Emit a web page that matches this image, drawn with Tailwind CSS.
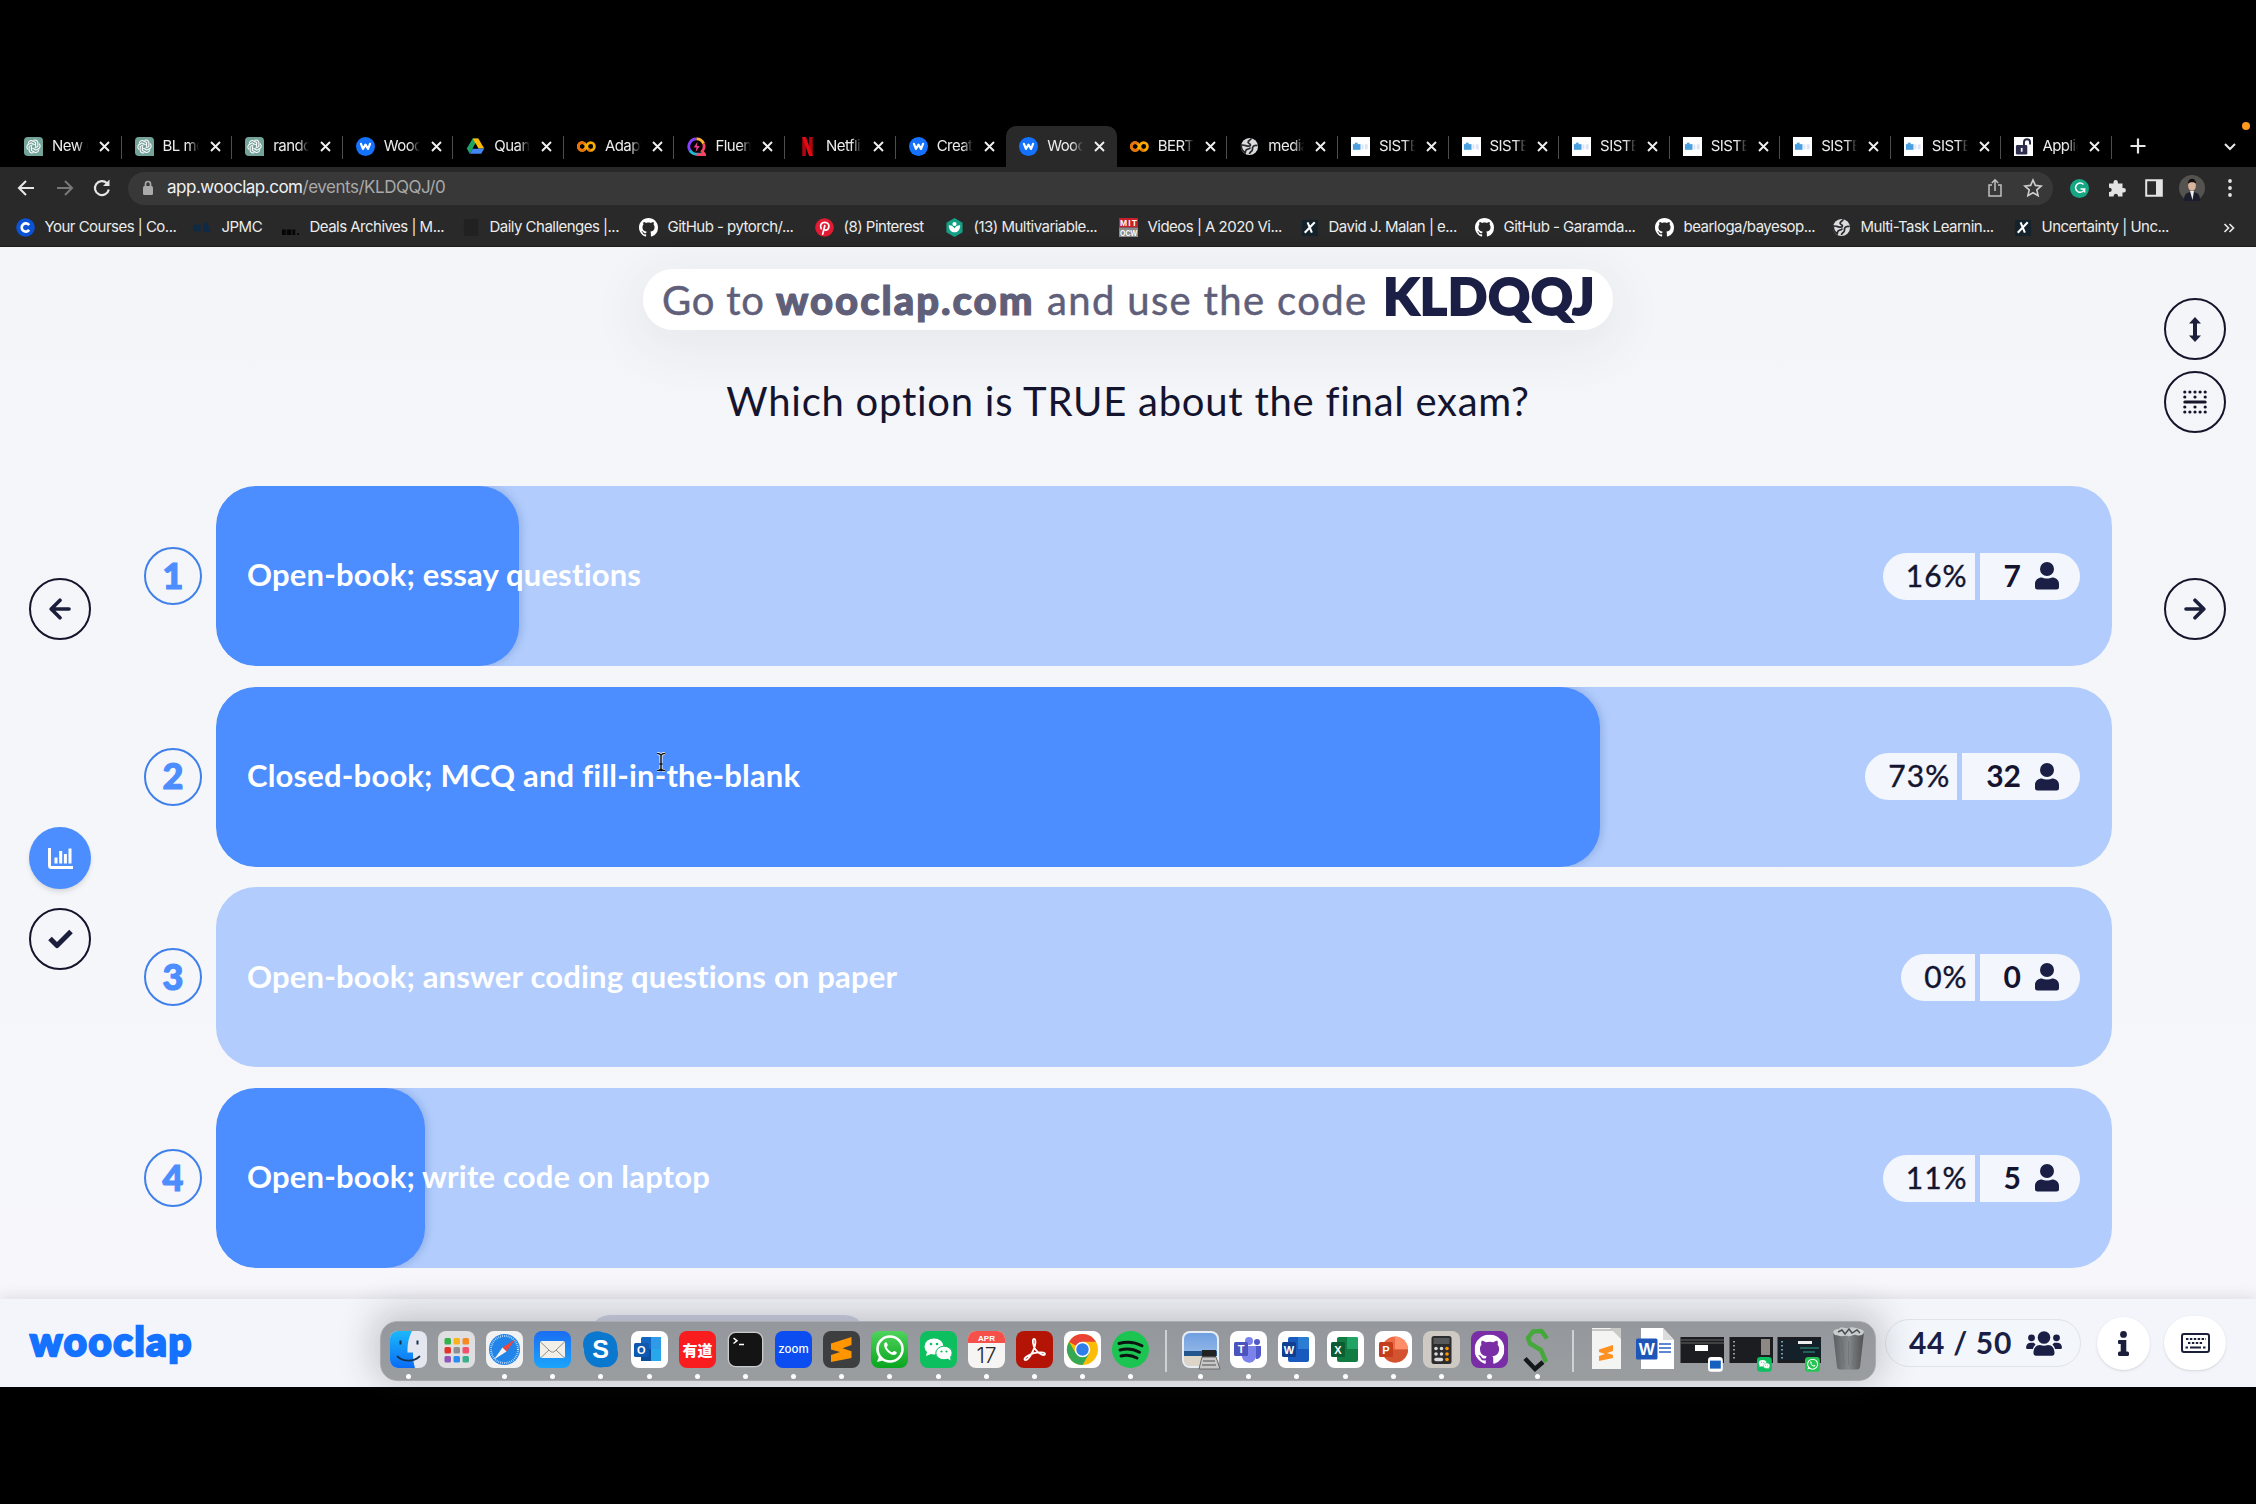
<!DOCTYPE html>
<html lang="en">
<head>
<meta charset="utf-8">
<title>Wooclap</title>
<script src="https://cdn.jsdelivr.net/npm/@tailwindcss/browser@4"></script>
</head>
<body class="w-[2256px] h-[1504px] overflow-hidden bg-black font-['Inter',sans-serif]">
<svg class="absolute w-0 h-0" xmlns="http://www.w3.org/2000/svg">
  <defs>
    <linearGradient id="gBlue" x1="0" y1="0" x2="0" y2="1"><stop offset="0" stop-color="#1cb8fb"/><stop offset="1" stop-color="#0a6cf5"/></linearGradient>
    <linearGradient id="gMail" x1="0" y1="0" x2="0" y2="1"><stop offset="0" stop-color="#1a6df2"/><stop offset="1" stop-color="#1ba5fb"/></linearGradient>
    <linearGradient id="gGreen" x1="0" y1="0" x2="0" y2="1"><stop offset="0" stop-color="#4fd35c"/><stop offset="1" stop-color="#0aa51f"/></linearGradient>
    <linearGradient id="gSky" x1="0" y1="0" x2="0" y2="1"><stop offset="0" stop-color="#6f9fe0"/><stop offset="1" stop-color="#a9c6ee"/></linearGradient>
    <linearGradient id="gTrash" x1="0" y1="0" x2="1" y2="0"><stop offset="0" stop-color="#5b5e60"/><stop offset=".5" stop-color="#85888a"/><stop offset="1" stop-color="#4e5052"/></linearGradient>
    <symbol id="gpt" viewBox="0 0 20 20"><path d="M4 0h12a4 4 0 0 1 4 4v16H4a4 4 0 0 1-4-4V4a4 4 0 0 1 4-4z" fill="#74a39a"/><g fill="none" stroke="#fff" stroke-width="1.1"><path id="pt" d="M10 3.6a3.2 3.2 0 0 1 4.6 2.1v4.2L10.8 12"/><use href="#pt" transform="rotate(60 10 10)"/><use href="#pt" transform="rotate(120 10 10)"/><use href="#pt" transform="rotate(180 10 10)"/><use href="#pt" transform="rotate(240 10 10)"/><use href="#pt" transform="rotate(300 10 10)"/></g></symbol>
    <symbol id="woo" viewBox="0 0 20 20"><circle cx="10" cy="10" r="10" fill="#1472ff"/><path d="M5.2 7.2l2.1 5.4L10 8l2.7 4.6 2.1-5.4" fill="none" stroke="#fff" stroke-width="2.3" stroke-linecap="round" stroke-linejoin="round"/></symbol>
    <symbol id="drive" viewBox="0 0 20 20"><path d="M7 1.5h6L7.2 12 4 17.5.8 12z" fill="#1fa463"/><path d="M7 1.5h6L19.2 12h-6.3z" fill="#ffba00"/><path d="M4 17.5L7.2 12h12L16 17.5z" fill="#4285f4"/><path d="M10 6.7L13 12H7z" fill="#000"/></symbol>
    <symbol id="colab" viewBox="0 0 20 20"><g fill="none" stroke-width="2.8"><circle cx="5.4" cy="10" r="4" stroke="#f9ab00"/><circle cx="14.4" cy="10" r="4" stroke="#f9ab00"/><path d="M8.2 7.2a4 4 0 1 0 0 5.6M11.6 12.8a4 4 0 0 0 2.8 1.2" stroke="#e8710a"/></g></symbol>
    <symbol id="fluent" viewBox="0 0 20 20"><g fill="none" stroke-width="3"><path d="M10 2A8 8 0 0 0 3 14" stroke="#8a3ffc"/><path d="M3 14a8 8 0 0 0 6 4h8" stroke="#22b8d8"/><path d="M10 2a8 8 0 0 1 7.5 5" stroke="#ffb52e"/><path d="M17.5 7A8 8 0 0 1 16 15l2.500 3.500H10" stroke="#f9445f"/></g><path d="M11 5L7 11h3l-1 5 4.500-6.500h-3z" fill="#f23a8c"/></symbol>
    <symbol id="netflix" viewBox="0 0 20 20"><path d="M4.500 0h3.800v20H4.500zM11.700 0h3.800v20h-3.800z" fill="#b1060f"/><path d="M4.500 0h3.900l7.100 20h-3.800z" fill="#e50914"/></symbol>
    <symbol id="globe" viewBox="0 0 20 20"><circle cx="10" cy="10" r="9" fill="#dadce0"/><path d="M12 1.500c-1 2-3.500 2-3.500 4 0 1.500 2.500 1 2.500 3 0 1.500-2 1-3.500 1S5 8 1.500 8.500c-.5 4 1.500 6.500 4 8 .5-1.500 0-3 2-3.500 2-.3 3-.5 3.500-2M18.500 9c-2-.5-4 0-5 1.500s.5 2.500-1 4-2.500 1.500-2.500 3.500" fill="none" stroke="#2a2a2a" stroke-width="1.800"/></symbol>
    <symbol id="sist" viewBox="0 0 20 20"><path fill="#fff" d="M0 0h20v20H0z"/><path d="M2 7.500h8v6H2z" fill="#4a9fe0"/><path d="M4 6h3v2H4z" fill="#4a9fe0"/><path d="M11 8h2v5h-2zM14.500 7.500h3v5.500h-3z" fill="#dde3f6"/></symbol>
    <symbol id="unlock" viewBox="0 0 20 20"><path fill="#fff" d="M0 0h20v20H0z"/><path d="M10.500 9V5.500a3.200 3.200 0 0 1 6.400 0V8" fill="none" stroke="#23233f" stroke-width="2"/><rect x="2" y="8.500" width="12" height="10" rx="1.500" fill="#2d2d4d"/><path d="M7.200 11.500h1.800v4H7.200z" fill="#fff"/></symbol>
    <symbol id="gh" viewBox="0 0 16 16"><path fill="#fff" fill-rule="evenodd" d="M8 0C3.580 0 0 3.580 0 8c0 3.540 2.290 6.530 5.470 7.590.4.070.55-.17.55-.38 0-.19-.01-.82-.01-1.490-2.010.37-2.530-.49-2.690-.94-.09-.23-.48-.94-.82-1.130-.28-.15-.68-.52-.01-.53.63-.01 1.080.58 1.230.82.72 1.210 1.870.87 2.330.66.070-.52.28-.87.51-1.070-1.780-.2-3.640-.89-3.640-3.950 0-.87.310-1.590.82-2.150-.08-.2-.36-1.020.08-2.120 0 0 .67-.21 2.200.82.64-.18 1.320-.27 2-.27s1.360.09 2 .27c1.530-1.040 2.200-.82 2.200-.82.44 1.100.16 1.920.08 2.120.51.56.82 1.270.82 2.150 0 3.070-1.870 3.750-3.650 3.950.29.25.54.73.54 1.480 0 1.070-.01 1.930-.01 2.200 0 .21.15.46.55.38A8.010 8.010 0 0 0 16 8c0-4.420-3.580-8-8-8z"/></symbol>
    <symbol id="coursera" viewBox="0 0 20 20"><circle cx="10" cy="10" r="9.800" fill="#0a52d6"/><path d="M13.800 12.500a4.300 4.300 0 1 1 0-5" fill="none" stroke="#fff" stroke-width="2.800"/></symbol>
    <symbol id="jpmc" viewBox="0 0 20 20"><path d="M0 7h8v7H0zM11 5h4l4 10h-8z" fill="#0f2a44"/></symbol>
    <symbol id="deals" viewBox="0 0 20 20"><path d="M1 12h4v6H1zM6 12h5v6H6zM12 12h3v6h-3zM17 16h2v2h-2z" fill="#050505"/></symbol>
    <symbol id="daily" viewBox="0 0 20 20"><path d="M3 1h15v18H3z" fill="#212121"/></symbol>
    <symbol id="pin" viewBox="0 0 20 20"><circle cx="10" cy="10" r="9.800" fill="#e21b35"/><path d="M6.500 11.200C4.500 7.500 7 4.700 10.300 4.700c3 0 4.700 2 4.300 4.700-.4 3-2.600 4-4.500 2.900M10.300 8l-2.200 9" fill="none" stroke="#fff" stroke-width="1.900" stroke-linecap="round"/></symbol>
    <symbol id="khan" viewBox="0 0 20 20"><path d="M10 0l8.500 5v10L10 20l-8.500-5V5z" fill="#14a085"/><circle cx="10" cy="6.300" r="2.200" fill="#fff"/><path d="M4 7.500c3.500 0 5 1.500 6 3.500 1-2 2.500-3.500 6-3.500 0 5-2.500 7.500-6 7.500s-6-2.500-6-7.500z" fill="#fff"/></symbol>
    <symbol id="mit" viewBox="0 0 20 20"><path fill="#c5202c" d="M0 0h20v10H0z"/><path fill="#8a8a8a" d="M0 10h20v10H0z"/><text x="10" y="8.600" font-family="Liberation Sans" font-weight="700" font-size="9" textLength="18" fill="#fff" text-anchor="middle">MIT</text><text x="10" y="18.500" font-family="Liberation Sans" font-weight="700" font-size="9" textLength="18" lengthAdjust="spacingAndGlyphs" fill="#fff" text-anchor="middle">OCW</text></symbol>
    <symbol id="edx" viewBox="0 0 20 20"><path fill="#14232b" d="M2 2h17v17H2z"/><path d="M8 4.500l4.500 11M15.500 4.500L5 15.500" stroke="#fff" stroke-width="2.200" fill="none"/></symbol>
    <symbol id="person" viewBox="0 0 24 28"><circle cx="12" cy="7" r="7" fill="#1b1f45"/><path d="M0 22c0-4 3-6.500 7-6.500 1.500.7 3 1 5 1s3.500-.3 5-1c4 0 7 2.500 7 6.500v3a2.500 2.500 0 0 1-2.500 2.500h-19A2.500 2.500 0 0 1 0 25z" fill="#1b1f45"/></symbol>
  </defs>
</svg>

<div class="flex flex-col h-[1387px]">
  <!-- tab strip -->
  <div class="h-[167px] pt-[126px] pl-[11px] flex shrink-0 relative">
    <div id="tabs" class="flex h-[41px]"></div>
    <svg class="w-[18px] h-[18px] mt-[11px] ml-[17px]" viewBox="0 0 18 18" stroke="#e8e8e8" stroke-width="2.200"><path d="M9 1.500v15M1.500 9h15"/></svg>
    <svg class="w-[14px] h-[14px] mt-[14px] ml-[76px]" viewBox="0 0 14 14" fill="none" stroke="#e8e8e8" stroke-width="2"><path d="M2 4l5 5 5-5"/></svg>
    <div class="absolute left-[2242px] top-[122px] w-2 h-2 rounded-full bg-[#ff9a1f]"></div>
  </div>
  <!-- toolbar -->
  <div class="h-[42px] shrink-0 bg-[#292929] flex items-center pl-[16px]">
    <svg class="w-5 h-5 mr-[19px]" viewBox="0 0 20 20" fill="none" stroke="#e6e6e6" stroke-width="2.100"><path d="M18 10H3.500M10 3l-7 7 7 7"/></svg>
    <svg class="w-5 h-5 mr-[17px]" viewBox="0 0 20 20" fill="none" stroke="#777" stroke-width="2.100"><path d="M2 10h14.500M10 3l7 7-7 7"/></svg>
    <svg class="w-5 h-5 mr-[16px]" viewBox="0 0 20 20" fill="none" stroke="#e6e6e6" stroke-width="2.200"><path d="M16.800 11.500A7 7 0 1 1 15 5.200"/><path d="M17.500 1.500v6.500H11z" fill="#e6e6e6" stroke="none"/></svg>
    <div class="w-[1925px] h-[33px] rounded-full bg-[#383838] flex items-center pl-[14px] pr-[10px]">
      <svg class="w-3 h-4" viewBox="0 0 12 16"><rect x="1" y="6" width="10" height="9" rx="1.500" fill="#aaa"/><path d="M3.500 7V4a2.500 2.500 0 0 1 5 0v3" fill="none" stroke="#aaa" stroke-width="1.700"/></svg>
      <div class="ml-[13px] text-[17px] tracking-[-0.480px] text-[#a9a9a9] whitespace-nowrap"><span class="text-[#f1f1f1]">app.wooclap.com</span>/events/KLDQQJ/0</div>
      <svg class="w-4 h-5 ml-auto mr-[20px]" viewBox="0 0 16 20" fill="none" stroke="#c0c0c0" stroke-width="1.500"><path d="M5 7H2v11h12V7h-3M8 13V2M4.800 5L8 1.800 11.200 5"/></svg>
      <svg class="w-5 h-5" viewBox="0 0 20 20" fill="none" stroke="#cfcfcf" stroke-width="1.600"><path d="M10 2l2.400 5.400 5.800.6-4.400 3.900 1.300 5.800L10 14.700l-5.100 3 1.300-5.800L1.800 8l5.800-.6z"/></svg>
    </div>
    <div class="ml-[17px] w-[19px] h-[19px] rounded-full bg-[#15a683] flex items-center justify-center"><svg class="w-3 h-3" viewBox="0 0 12 12" fill="none" stroke="#fff" stroke-width="1.500"><path d="M9.500 2.500A4.600 4.600 0 1 0 10.600 7H6.500M10.600 6.500v4"/></svg></div>
    <svg class="w-5 h-5 ml-[18px]" viewBox="0 0 20 20" fill="#e3e3e3"><path d="M2 5.500h4.500V4.200a2.200 2.200 0 0 1 4.400 0v1.300H15.500V10h1.200a2.200 2.200 0 0 1 0 4.400h-1.200v4.100H11v-1a2.200 2.200 0 0 0-4.300 0v1H2V14h1a2.200 2.200 0 0 0 0-4.300H2z"/></svg>
    <svg class="w-[18px] h-[18px] ml-[18px]" viewBox="0 0 18 18"><path d="M1.200 1.200h15.600v15.600H1.200z" fill="none" stroke="#e3e3e3" stroke-width="2"/><path d="M11 1h6v16h-6z" fill="#e3e3e3"/></svg>
    <svg class="w-[26px] h-[26px] ml-[16px]" viewBox="0 0 26 26"><circle cx="13" cy="13" r="13" fill="#55534f"/><path d="M5 25c0-6 3-8 8-8s8 2 8 8a13 13 0 0 1-16 0z" fill="#1b1d2c"/><path d="M11 16h4l-1.500 9z" fill="#eee"/><ellipse cx="13" cy="10.500" rx="3.900" ry="5.300" fill="#d9b49d"/><path d="M8.800 9c0-7 8.400-7 8.400 0-1-2.500-7-2.500-8.400 0z" fill="#14100e"/></svg>
    <svg class="w-1 h-5 ml-[23px]" viewBox="0 0 4 20" fill="#e3e3e3"><circle cx="2" cy="3" r="1.900"/><circle cx="2" cy="10" r="1.900"/><circle cx="2" cy="17" r="1.900"/></svg>
  </div>
  <!-- bookmarks -->
  <div class="h-[38px] shrink-0 bg-[#292929] flex items-center pl-[15.500px] border-b border-[#1d1d1d]">
    <div id="marks" class="flex"></div>
    <svg class="w-3 h-3 ml-[9px]" viewBox="0 0 12 12" fill="none" stroke="#e6e6e6" stroke-width="1.700"><path d="M1.500 2l4 4-4 4M6.500 2l4 4-4 4"/></svg>
  </div>

  <!-- page -->
  <div class="h-[1052px] shrink-0 flex bg-linear-to-b from-[#f4f5f8] via-[#f5f6fa] to-[#f6f6fb]">
    <aside class="w-[144px] pl-[29px] pt-[331px] flex flex-col">
      <button class="w-[62px] h-[62px] rounded-full border-2 border-[#14142b] flex items-center justify-center"><svg class="w-[22px] h-[22px]" viewBox="0 0 22 22" fill="none" stroke="#1b1f3b" stroke-width="3.600" stroke-linecap="round" stroke-linejoin="round"><path d="M20 11H2.500M11 2.200L2.200 11l8.800 8.800"/></svg></button>
      <button class="mt-[187px] w-[62px] h-[62px] rounded-full bg-[#4c8dff] shadow-md flex items-center justify-center"><svg class="w-[25px] h-[21px]" viewBox="0 0 25 21" fill="none" stroke="#fff" stroke-width="3"><path d="M1.500 0v17.500a2 2 0 0 0 2 2H25M8 15.500v-6M12.700 15.500V3M17.400 15.500V6M22 15.500V.5"/></svg></button>
      <button class="mt-[19px] w-[62px] h-[62px] rounded-full border-2 border-[#14142b] flex items-center justify-center"><svg class="w-[25px] h-[20px]" viewBox="0 0 25 20" fill="none" stroke="#1b1f3b" stroke-width="5"><path d="M2 9.500l7 7L23 2.500" stroke-linejoin="round"/></svg></button>
    </aside>
    <main class="w-[1968px] pt-[22px] flex flex-col items-center font-['Lato',sans-serif]">
      <div class="w-[970px] h-[61px] rounded-[30px] bg-white shadow-[0_12px_50px_10px_rgba(40,45,60,0.06)] flex items-baseline pl-[19px] text-[40px] leading-[59px] text-[#5f5f7a] whitespace-nowrap">
        <span class="w-[114px] tracking-[0.800px] [-webkit-text-stroke:0.500px_#5f5f7a]">Go to</span>
        <span class="w-[271px] font-black tracking-[2px] [-webkit-text-stroke:1.200px_#5f5f7a]">wooclap.com</span>
        <span class="w-[336px] tracking-[1.350px] [-webkit-text-stroke:0.500px_#5f5f7a]">and use the code</span>
        <span class="text-[52px] leading-none font-black tracking-[0.700px] text-[#1b1f45] [-webkit-text-stroke:1.800px_#1b1f45]">KLDQQJ</span>
      </div>
      <h1 class="mt-[41px] h-[60px] leading-[60px] text-[40px] tracking-[0.750px] text-[#14142f] whitespace-nowrap">Which option is TRUE about the final exam?</h1>
      <div id="bars" class="w-full mt-[55px] flex flex-col gap-[20.700px]"></div>
    </main>
    <aside class="w-[144px] pl-[52px] pt-[51px] flex flex-col">
      <button class="w-[62px] h-[62px] rounded-full border-2 border-[#14142b] flex items-center justify-center"><svg class="w-[12px] h-[25px]" viewBox="0 0 12 25" fill="#1b1f3b"><path d="M6 0l6 6.500H8v12h4L6 25l-6-6.500h4v-12H0z"/></svg></button>
      <button class="mt-[11px] w-[62px] h-[62px] rounded-full border-2 border-[#14142b] flex items-center justify-center"><svg class="w-[24px] h-[24px]" viewBox="0 0 24 24" stroke="#14142b" stroke-width="3" stroke-linecap="round"><path d="M1.800 12h20.400"/><path stroke-width="3.200" d="M1.800 2h.01M6.900 2h.01M12 2h.01M17.100 2h.01M22.200 2h.01M1.800 7h.01M12 7h.01M22.200 7h.01M1.800 17h.01M12 17h.01M22.200 17h.01M1.800 22h.01M6.900 22h.01M12 22h.01M17.100 22h.01M22.200 22h.01"/></svg></button>
      <button class="mt-[145px] w-[62px] h-[62px] rounded-full border-2 border-[#14142b] flex items-center justify-center"><svg class="w-[22px] h-[22px]" viewBox="0 0 22 22" fill="none" stroke="#1b1f3b" stroke-width="3.600" stroke-linecap="round" stroke-linejoin="round"><path d="M2 11h17.500M11 2.200l8.800 8.800-8.800 8.800"/></svg></button>
    </aside>
  </div>

  <!-- footer -->
  <footer class="h-[88px] shrink-0 relative bg-[#f3f5fa] shadow-[0_-2px_14px_rgba(30,35,50,0.12)] flex items-center pl-[30px] font-['Lato',sans-serif]">
    <div class="w-[1855px] text-[40px] font-black text-[#1472ff] leading-[84px] pb-1 tracking-[1.700px] [-webkit-text-stroke:2.400px_#1472ff]">wooclap</div>
    <div class="w-[196px] h-[48px] rounded-full border border-[#dfe3ea] bg-[#f3f6fb] flex items-center pl-[23px] text-[30px] leading-[44px] font-bold text-[#1b1f45]">
      <span class="w-[117px] tracking-[0.700px] pb-[3px]">44 / 50</span>
      <svg class="w-[36px] h-[25px]" viewBox="0 0 36 25" fill="#1b1f45"><circle cx="18" cy="6.500" r="6.300"/><circle cx="5.500" cy="6.800" r="3.400"/><circle cx="30.500" cy="6.800" r="3.400"/><path d="M0 17c0-3.500 2-5.300 5-5.300h3l1.500 2C8 15 7.300 16.200 7 18H1zM36 17c0-3.500-2-5.300-5-5.300h-3l-1.500 2c1.500 1.300 2.200 2.500 2.500 4.300h6zM7.500 22c0-5 2.500-8 6.500-8 2.500 1 5.500 1 8 0 4 0 6.500 3 6.500 8 0 1.800-1 2.800-2.500 2.800H10c-1.500 0-2.500-1-2.500-2.800z"/></svg>
    </div>
    <div class="ml-[16px] w-[53px] h-[53px] rounded-full bg-white shadow-sm flex items-center justify-center"><svg class="w-[11px] h-[25px]" viewBox="0 0 11 25" fill="#1b1f3b"><circle cx="5.500" cy="3.400" r="3.400"/><path d="M1 9h7.300v11.500h1.200A1.500 1.500 0 0 1 11 22v1.500A1.500 1.500 0 0 1 9.500 25h-8A1.500 1.500 0 0 1 0 23.500V22a1.500 1.500 0 0 1 1.500-1.500h1.200V13H1a1 1 0 0 1-1-1v-2a1 1 0 0 1 1-1z"/></svg></div>
    <div class="ml-[14px] w-[62px] h-[54px] rounded-[27px] bg-white shadow-sm flex items-center justify-center"><svg class="w-[29px] h-[20px]" viewBox="0 0 29 20"><rect x="1" y="1" width="27" height="18" rx="2" fill="none" stroke="#1b1f3b" stroke-width="2"/><path d="M5 6h20M7 10h15.500" stroke="#1b1f3b" stroke-width="2.200" fill="none" stroke-dasharray="2.400 1.500"/><path d="M4.500 14.500h2.500M9 14.500h11M22 14.500h2.500" stroke="#1b1f3b" stroke-width="2"/></svg></div>
    <!-- macOS dock floats over the page -->
    <div class="absolute left-[590px] top-[16px] w-[275px] h-[40px] rounded-[20px] bg-[#b9bcd6]/60"></div>
    <div class="absolute left-[380px] top-[21.500px] w-[1496px] h-[60px] rounded-[17px] border border-[#a9acb0] bg-linear-to-b from-[#94989d] to-[#9a9da0] shadow-[0_-4px_36px_6px_rgba(40,42,50,0.24)] pl-[3px] flex" id="dock"></div>
  </footer>
</div>

<svg class="absolute left-[655px] top-[752px] w-[12px] h-[20px]" viewBox="0 0 12 20" fill="none"><path d="M2 1.500c2 0 3.200.3 4 1.500.8-1.200 2-1.500 4-1.500M6 3v14M2 18.500c2 0 3.200-.3 4-1.500.8 1.200 2 1.500 4 1.500M4.500 12h3" stroke="#fff" stroke-width="3"/><path d="M2 1.500c2 0 3.200.3 4 1.500.8-1.200 2-1.500 4-1.500M6 3v14M2 18.500c2 0 3.200-.3 4-1.500.8 1.200 2 1.500 4 1.500M4.500 12h3" stroke="#111" stroke-width="1.500"/></svg>

<script>
const tabs = [['gpt','New chat'],['gpt','BL model'],['gpt','random'],['woo','Wooclap'],['drive','Quantum'],['colab','Adaptive'],['fluent','Fluent'],['netflix','Netflix'],['woo','Create'],['woo','Wooclap',1],['colab','BERT m'],['globe','media'],['sist','SISTEM'],['sist','SISTEM'],['sist','SISTEM'],['sist','SISTEM'],['sist','SISTEM'],['sist','SISTEM'],['unlock','Applied']];
document.getElementById('tabs').innerHTML = tabs.map(([icon, label, active], i) => `
  <div class="relative w-[110.580px] h-[41px] flex items-center pl-[13px] ${active ? 'bg-[#292929] rounded-t-[10px]' : ''}">
    <svg class="w-[19px] h-[19px] shrink-0"><use href="#${icon}"/></svg>
    <div class="ml-[9px] w-[36px] overflow-hidden whitespace-nowrap text-[15px] tracking-[-0.550px] text-[#ececec] mask-r-from-70%">${label}</div>
    <svg class="w-[11px] h-[11px] ml-[11px]" viewBox="0 0 11 11" stroke="#f0f0f0" stroke-width="1.900"><path d="M1 1l9 9M10 1l-9 9"/></svg>
    ${active || i === 9 || i === 8 ? '' : '<div class="absolute right-0 top-[10px] w-px h-[23px] bg-[#4d4d4d]"></div>'}
  </div>`).join('');

const marks = [['coursera','Your Courses | Co...',177],['jpmc','JPMC',88],['deals','Deals Archives | M...',180],['daily','Daily Challenges |...',178],['gh','GitHub - pytorch/...',176],['pin','(8) Pinterest',130],['khan','(13) Multivariable...',174],['mit','Videos | A 2020 Vi...',181],['edx','David J. Malan | e...',175],['gh','GitHub - Garamda...',180],['gh','bearloga/bayesop...',177],['globe','Multi-Task Learnin...',181],['edx','Uncertainty | Unc...',201]];
document.getElementById('marks').innerHTML = marks.map(([icon, label, w]) => `
  <div class="flex items-center" style="width:${w}px">
    <svg class="w-[19px] h-[19px] shrink-0 mr-[10px]"><use href="#${icon}"/></svg>
    <span class="text-[15px] tracking-[-0.520px] text-[#ececec] whitespace-nowrap">${label}</span>
  </div>`).join('');

const bars = [['Open-book; essay questions',16,7],['Closed-book; MCQ and fill-in-the-blank',73,32],['Open-book; answer coding questions on paper',0,0],['Open-book; write code on laptop',11,5]];
document.getElementById('bars').innerHTML = bars.map(([label, pct, n], i) => `
  <div class="flex items-center h-[180px]">
    <div class="w-[58px] h-[58px] rounded-full border-2 border-[#4080ea] flex items-center justify-center pb-[3px] text-[36px] font-black text-[#4c8dff] [-webkit-text-stroke:1.200px_#4c8dff]">${i + 1}</div>
    <div class="relative ml-[14px] w-[1896px] h-[180px] rounded-[40px] bg-[#b2cdfd] overflow-hidden flex items-center">
      <div class="absolute inset-y-0 left-0 rounded-[40px] bg-[#4c8dff] shadow-[2px_0_8px_rgba(40,80,160,0.25)]" style="width:${pct}%"></div>
      <span class="relative ml-[31px] pb-[3px] text-[31px] tracking-[0.180px] font-bold text-white">${label}</span>
      <div class="relative ml-auto mr-[32px] flex gap-[5px] text-[30px] leading-[45px] text-[#14142f]">
        <div class="h-[47px] rounded-l-full bg-[#f3f7fd] pl-[23px] pr-[7px] tracking-[1px] [-webkit-text-stroke:0.400px_#14142f]">${pct}%</div>
        <div class="h-[47px] rounded-r-full bg-[#f3f7fd] pl-[24px] pr-[21px] flex items-center font-bold"><span class="pb-[2px]">${n}</span><svg class="w-[24px] h-[28px] ml-[14px]"><use href="#person"/></svg></div>
      </div>
    </div>
  </div>`).join('');

const T = (x, y, s, fill, t, w = 700, f = 'Liberation Sans') => `<text x="${x}" y="${y}" font-family="${f}" font-size="${s}" font-weight="${w}" fill="${fill}" text-anchor="middle">${t}</text>`;
const bg = (fill) => `<rect width="37" height="37" rx="8" fill="${fill}"/>`;
const office = (c1, c2, c3, ch) => bg('#fff') + `<rect x="10" y="6" width="21" height="25" rx="2" fill="${c1}"/><path d="M20 6h9a2 2 0 0 1 2 2v10H20z" fill="${c2}"/><rect x="4" y="11" width="14" height="15" rx="1.500" fill="${c3}"/>` + T(11, 22.500, 11, '#fff', ch);
const chat = '<ellipse cx="14" cy="15.500" rx="9.500" ry="8" fill="#fff"/><path d="M7 21l-1 4 5-2z" fill="#fff"/><ellipse cx="24" cy="22" rx="8.200" ry="6.800" fill="#fff" stroke="#0dbf5f"/><path d="M27 27l3.500 2.500-.5-4z" fill="#fff"/><g fill="#0dbf5f"><circle cx="11" cy="13" r="1.300"/><circle cx="17" cy="13" r="1.300"/><circle cx="21.500" cy="20.500" r="1.100"/><circle cx="26.500" cy="20.500" r="1.100"/></g>';
const phone = '<circle cx="19" cy="18" r="12.500" fill="none" stroke="#fff" stroke-width="2.600"/><path d="M8.500 24L6 31l7.500-2z" fill="#fff"/><path d="M13.500 12c1.500-1.500 2.500-.5 3.300 2 .3 1-1.500 1.500-1 2.500 1 2 3 4 5 4.700 1 .3 1.500-1.700 2.700-1.200 2.500 1 3 1.800 1.500 3.200-4 3.500-14-5.500-11.500-11.200z" fill="#fff"/>';
const win = (body, badge) => `<g transform="translate(-4 0)"><rect x="-.5" y="6" width="43.500" height="26" fill="#1b1d20"/>${body}<g transform="translate(27 26) scale(.4)">${badge}</g></g>`;
const icons = [
  bg('#e4e7ef') + '<path d="M8 0h14c-4 8-4.500 14-4.500 21.500h5.500c0 6 .5 11 2 15.500H8a8 8 0 0 1-8-8V8a8 8 0 0 1 8-8z" fill="url(#gBlue)"/><path d="M10.500 9.500v4M27.500 9.500v4" stroke="#16324f" stroke-width="2"/><path d="M7.500 25.500c6 5.500 16 5.500 22 0" fill="none" stroke="#16324f" stroke-width="1.700" stroke-linecap="round"/>',
  bg('#dfdfe2') + [['#34b24a','#f9b31c','#f58a1f'],['#e3342b','#8e8e93','#f2506b'],['#9254b8','#2a8cf0','#3cb08b']].map((r, y) => r.map((c, x) => `<rect x="${6.500 + x * 9}" y="${7 + y * 9}" width="6.500" height="6.500" rx="1.500" fill="${c}"/>`).join('')).join(''),
  bg('#f2f2f2') + '<circle cx="18.500" cy="18.500" r="15.500" fill="#2184e8"/><circle cx="18.500" cy="18.500" r="13.500" fill="none" stroke="#dcecff" stroke-width="2" stroke-dasharray=".7 1.200"/><path d="M29 8.500L20.500 20.500l-4-4z" fill="#f0453a"/><path d="M8 28.500l8.500-12 4 4z" fill="#f3f3f3"/>',
  bg('url(#gMail)') + '<rect x="6" y="10" width="25" height="17" rx="2" fill="#f1efe8"/><path d="M6.500 11l9.500 9c1.500 1.500 3.500 1.500 5 0l9.500-9M7 26.500l8-7.500M30 26.500L22 19" fill="none" stroke="#8e8d87" stroke-width="1"/>',
  '<path d="M11 1a12 12 0 0 1 10 .6C30 2 36 9 35.300 18.500c3 9-3.500 18.500-13 17.500C11 38.500 1.500 30 2 18.500-1 10 3.500 2 11 1z" fill="#0b78d0"/>' + T(18.500, 27, 25, '#fff', 'S'),
  bg('#fff') + '<rect x="10" y="6" width="20" height="24" rx="1.500" fill="#1066c0"/><path d="M20 6h10v12H20z" fill="#2f9be8"/><path d="M10 18h10v12H10z" fill="#0b4c9a"/><path d="M20 18h10v12H20z" fill="#28a8ea"/><rect x="3" y="12" width="15" height="14" rx="1.500" fill="#0f58b0"/>' + T(10.300, 23, 11, '#fff', 'O'),
  bg('#f91d20') + T(18.500, 24.500, 15, '#fff', '有道', 900, 'Noto Sans CJK SC'),
  '<rect x=".7" y=".7" width="35.600" height="35.600" rx="8" fill="#c9cbcd"/><rect x="2" y="2" width="33" height="33" rx="6.500" fill="#141414"/><path d="M6.500 7l3.500 2.800L6.500 12.500M12 13.500h5" fill="none" stroke="#fff" stroke-width="1.500"/>',
  bg('#0b4df0') + T(18.500, 22, 11.500, '#fff', 'zoom', 500, 'Inter'),
  bg('#3d3e40') + '<path d="M8 12.500L28.500 6v8l-9 3.300 9 2.900V27L8 31v-7l9-3-9-2.500z" fill="#ff9600"/>',
  bg('url(#gGreen)') + phone,
  bg('#0dbf5f') + chat,
  bg('#f6f5f3') + '<path d="M8 0h21a8 8 0 0 1 8 8v4H0V8a8 8 0 0 1 8-8z" fill="#f5514a"/>' + T(18.500, 9.500, 8, '#fff', 'APR') + T(18.500, 31.500, 21, '#2a2a2a', '17', 300, 'Inter'),
  bg('#b41405') + '<path d="M18 8c2.500 0 1.500 7-1 12-2.500 5-5.500 9.500-8 9-2.500-1.500 4-5.500 9-6.800 5-1.300 11-1 11 .8 0 2.500-6.500 0-9.500-4.500C17 15 15.800 8 18 8z" fill="none" stroke="#fff" stroke-width="1.800"/>',
  bg('#fff') + '<circle cx="18.500" cy="18.500" r="15.500" fill="#fbbc05"/><path d="M18.500 18.500L5.100 10.700A15.500 15.500 0 0 1 32 10.800H18.500z" fill="#ea4335"/><path d="M18.500 18.500l6.700 3.900L18.500 34A15.500 15.500 0 0 1 5.100 10.700l6.700 11.700z" fill="#34a853"/><circle cx="18.500" cy="18.500" r="7.700" fill="#fff"/><circle cx="18.500" cy="18.500" r="6.200" fill="#2f7de9"/>',
  '<circle cx="18.500" cy="18.500" r="18.500" fill="#1cc451"/><path d="M7 12.500c8-2.300 16-1.500 23 2.300M8 19c7-2 13.500-1.200 19.500 2.200M9 25c6-1.500 11-.8 16 2" fill="none" stroke="#0c1410" stroke-width="3" stroke-linecap="round"/>',
  null,
  bg('#e8eef5') + '<rect x="2" y="2" width="33" height="33" rx="6" fill="url(#gSky)"/><path d="M2 20h33v5H2z" fill="#23558f"/><path d="M2 25h33v4a6 6 0 0 1-6 6H8a6 6 0 0 1-6-6z" fill="#ddd5c8"/><path d="M20 19h14v8H20z" fill="#222"/><path d="M20 26h14l4 12H17z" fill="#c7c7c7" stroke="#6a6a6a"/><path d="M21 30h12M20 34h14" stroke="#777" stroke-width="1.500"/>',
  bg('#fff') + '<circle cx="27" cy="11" r="3" fill="#5059c9"/><circle cx="19" cy="10" r="4" fill="#7b83eb"/><path d="M23 15h8v8c0 3-2 5-5 5z" fill="#5059c9"/><path d="M12 15h14v8a7 7 0 0 1-14 3z" fill="#7b83eb"/><rect x="4" y="11" width="14" height="14" rx="1.500" fill="#4b53bc"/>' + T(11, 22, 11, '#fff', 'T'),
  office('#185abd', '#2b7cd3', '#103f91', 'W'),
  office('#107c41', '#21a366', '#0b5c33', 'X'),
  bg('#fff') + '<circle cx="20" cy="18.500" r="13" fill="#ed6c47"/><path d="M20 5.500a13 13 0 0 1 13 13H20z" fill="#ff8f6b"/><path d="M7 18.500h26a13 13 0 0 1-26 0z" fill="#d35230"/><rect x="4" y="11" width="14" height="15" rx="1.500" fill="#c43e1c"/>' + T(11, 22.500, 11, '#fff', 'P'),
  bg('#cfc9c4') + '<rect x="8.500" y="5" width="20" height="28" rx="2.500" fill="#2c2c2e"/><rect x="10.500" y="7" width="16" height="6" fill="#58595b"/><g fill="#d9d9d9"><circle cx="13" cy="17.500" r="1.800"/><circle cx="18.500" cy="17.500" r="1.800"/><circle cx="13" cy="23" r="1.800"/><circle cx="18.500" cy="23" r="1.800"/><rect x="11.200" y="26.800" width="9" height="3.500" rx="1.700"/></g><g fill="#ff9500"><circle cx="24" cy="17.500" r="1.800"/><circle cx="24" cy="23" r="1.800"/><circle cx="24" cy="28.500" r="1.800"/></g>',
  bg('#7a2ea6') + '<svg x="3.500" y="3.500" width="30" height="30"><use href="#gh"/></svg>',
  '<path d="M28 7.500L22.500 0 14 0.500 9 7l2 5.500 11 6.500 5 12" fill="none" stroke="#44a83a" stroke-width="4.500" stroke-linejoin="round"/><path d="M6 27.500L16 38l8-7" fill="none" stroke="#15181b" stroke-width="4.500"/>',
  null,
  '<path d="M3 -3h29v41H3z" fill="#f4f4f2"/><path d="M3-1h29" stroke="#999"/><path d="M21-3l11 11V-3z" fill="#c9c9c6"/><path d="M10 18.500l14-4.500v6l-6 2 6 2v3L10 30v-5l6-2-6-2z" fill="#ff9022"/>',
  '<path d="M4-3h22L37 9v29H4z" fill="#fff"/><path d="M26-3L37 9H26z" fill="#dcdcdc"/><path d="M22 13h12M22 17h12M22 21h12" stroke="#2b5fc2" stroke-width="1.300"/><rect x="-1" y="7.500" width="21.500" height="21" rx="1.500" fill="#1d56b8"/>' + T(9.800, 24, 17, '#fff', 'W'),
  win('<path d="M0 9h43M0 12h43" stroke="#666"/><path d="M14 14h13v6H14z" fill="#fff"/>', '<rect width="37" height="37" rx="8" fill="#fff"/><rect x="5" y="9" width="27" height="20" fill="#155fc0"/>'),
  win('<path d="M4 10v20" stroke="#999" stroke-dasharray="1.500 2.500" stroke-width="2"/><path d="M31 8h9v16h-9z" fill="#8d8884"/>', bg('#0dbf5f') + chat),
  win('<path d="M0 9h43v20H0z" fill="#14212a"/><path d="M4 10v20" stroke="#7fa0a0" stroke-dasharray="1.500 2.500" stroke-width="2"/><path d="M20 10h14v3H20z" fill="#eee"/><path d="M22 17h19M25 21h12" stroke="#1f6357" stroke-width="2"/>', bg('#25c552') + phone),
  '<path d="M3 1h31l-4 35a3 3 0 0 1-3 2.500H10A3 3 0 0 1 7 36z" fill="url(#gTrash)"/><path d="M3 1c2-4 5-2 7-4s5 1 8 0 5-1 8 0 7 1 8 4c-1 4-5 4-8 3s-5 2-8 1-5 1-8 0-6 0-7-4z" fill="#c9cccd"/><path d="M8 1l4-2 3 4 4-5 3 4 5-3 3 3" fill="none" stroke="#4a4d4f" stroke-width="1.400"/><path d="M12 10l2 24M18.500 10v24M25 10l-2 24" stroke="#6a6d6f" opacity=".6"/>',
];
document.getElementById('dock').innerHTML = icons.map((svg, i) => svg === null
  ? '<div class="w-[21.500px] pt-[8px] flex justify-center"><div class="w-[1.500px] h-[42px] bg-[#cfd1d3]"></div></div>'
  : `<div class="w-[48.200px] pt-[9px] flex flex-col items-center"><svg class="w-[37px] h-[37px] overflow-visible shrink-0" viewBox="0 0 37 37">${svg}</svg>${(i === 1 || i > 25) ? '' : '<div class="mt-[6px] w-[5px] h-[5px] rounded-full bg-white"></div>'}</div>`).join('');
</script>
</body>
</html>
